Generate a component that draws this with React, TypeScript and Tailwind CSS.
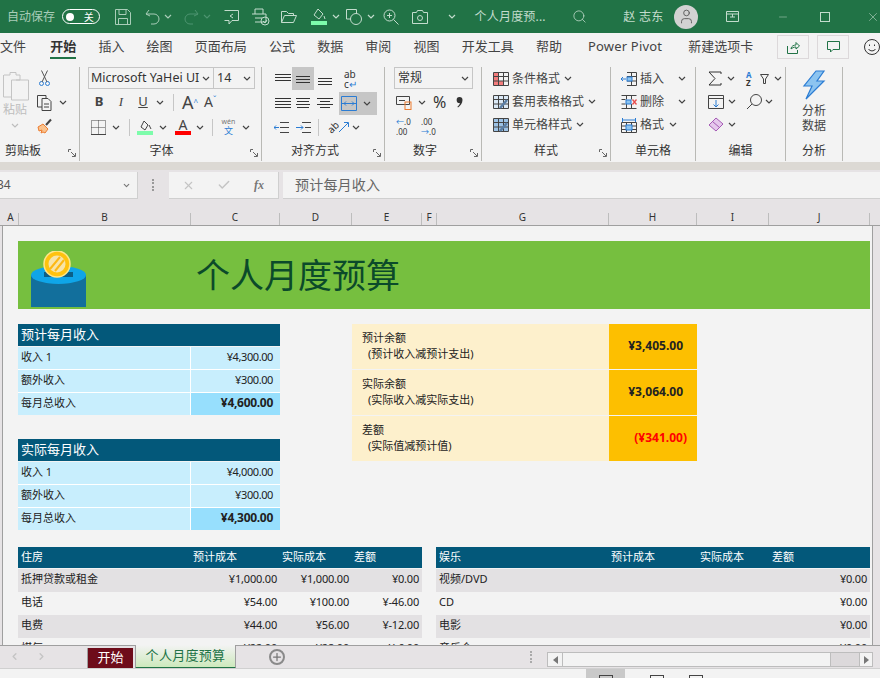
import React from 'react';
import { ChevronDown, Search, User, X, Check, Plus, Minus, ChevronLeft, ChevronRight } from 'lucide-react';

const Chev = ({ className = 'text-[#444]' }: { className?: string }) => (
  <svg width="8" height="5" viewBox="0 0 8 5" className={className} fill="none" stroke="currentColor" strokeWidth="1.2">
    <path d="M1 1l3 3 3-3" />
  </svg>
);

const Ico = ({ w = 16, h = 16, children, className = 'text-[#444]' }: { w?: number; h?: number; children: React.ReactNode; className?: string }) => (
  <svg width={w} height={h} viewBox={`0 0 ${w} ${h}`} fill="none" stroke="currentColor" strokeWidth="1" className={`shrink-0 ${className}`}>
    {children}
  </svg>
);

// dialog launcher in the ribbon group corner
const Launcher = () => (
  <div className="absolute right-[3px] bottom-[4px]">
    <Ico w={8} h={8} className="text-[#666]">
      <path d="M.5 3V.5H3M3 3l4 4M7.5 4v3.5H4" />
    </Ico>
  </div>
);

const Lines = ({ rows }: { rows: [number, number][] }) => (
  <Ico w={16} h={14} className="text-[#333]">
    {rows.map(([x, y], i) => (
      <path key={i} d={`M${x} ${y}.5H${16 - (x === 0 && i % 2 ? 0 : x)}`} />
    ))}
  </Ico>
);

const Group = ({ w, label, labelClass = 'text-center', launcher, children }: { w: string; label: string; labelClass?: string; launcher?: boolean; children: React.ReactNode }) => (
  <div className={`relative h-[94px] shrink-0 border-r border-[#b9b9b5] flex flex-col ${w}`}>
    <div className="flex-1">{children}</div>
    <div className={`h-[20px] text-[12px] leading-[20px] text-[#333] ${labelClass}`}>{label}</div>
    {launcher && <Launcher />}
  </div>
);

const tabs = [
  ['文件', 'w-[24px] mr-[4px]'],
  ['开始', 'w-[26px]'],
  ['插入', 'w-[26px]'],
  ['绘图', 'w-[26px]'],
  ['页面布局', 'w-[52px]'],
  ['公式', 'w-[26px]'],
  ['数据', 'w-[26px]'],
  ['审阅', 'w-[26px]'],
  ['视图', 'w-[26px]'],
  ['开发工具', 'w-[52px]'],
  ['帮助', 'w-[26px]'],
];

const TopBar = () => (
  <div className="h-[33px] bg-[#217346] flex items-center text-[#c3dccd] shrink-0 pl-[7px]">
    <span className="text-[12px] w-[55px] text-[#a9cdb8]">自动保存</span>
    <div className="w-[38px] h-[15px] rounded-full border border-white flex items-center justify-between px-[3px] text-[10px] text-white">
      <span className="w-[8px] h-[8px] rounded-full bg-white" />
      <span className="pr-[2px] leading-none">关</span>
    </div>
    <div className="ml-[15px] w-[30px]">
      <Ico w={16} h={16} className="text-[#a9cdb8]">
        <path d="M.5.500h12l3 3v12H.5zM4 .5v5h7v-5M3.500 15.500v-6h9v6" />
      </Ico>
    </div>
    <Ico w={15} h={16} className="text-[#a9cdb8]">
      <path d="M4 1L1 5l4 2M1 5h8a5 5 0 0 1 0 10H6" />
    </Ico>
    <div className="ml-[4px] w-[20px]"><Chev className="text-[#a9cdb8]" /></div>
    <Ico w={15} h={16} className="text-[#4d9470]">
      <path d="M11 1l3 4-4 2M14 5H6a5 5 0 0 0 0 10h3" />
    </Ico>
    <div className="ml-[4px] w-[21px]"><Chev className="text-[#4d9470]" /></div>
    <Ico w={15} h={16} className="text-[#c3dccd]">
      <path d="M.5 1.500h14v10H8L5 15v-3.500H.5M9 9L6 7l3-2" />
    </Ico>
    <div className="ml-[12px]">
      <Ico w={20} h={18} className="text-[#c3dccd]">
        <path d="M4 6V1h8v5M1 6h14v8H4M4 10h7" />
        <circle cx="14" cy="13" r="4" />
        <path d="M12 13l2 2 2-3" />
      </Ico>
    </div>
    <div className="ml-[10px]">
      <Ico w={16} h={14} className="text-[#c3dccd]">
        <path d="M.5 12.500v-11h5l2 2h5v2M.5 12.500l3-7h12l-3 7z" />
      </Ico>
    </div>
    <div className="ml-[14px] flex flex-col items-center w-[16px]">
      <Ico w={14} h={13} className="text-[#c3dccd]">
        <path d="M6 1l5 5-4 5-5-4zM12 8l1 3" />
      </Ico>
      <div className="w-[16px] h-[4px] bg-[#7dfcab]" />
    </div>
    <div className="ml-[5px] w-[14px]"><Chev className="text-[#c3dccd]" /></div>
    <Ico w={16} h={16} className="text-[#c3dccd]">
      <path d="M5 10H.5V.5h10V5" />
      <circle cx="10" cy="10" r="5.500" />
    </Ico>
    <div className="ml-[5px] w-[16px]"><Chev className="text-[#c3dccd]" /></div>
    <Ico w={16} h={16} className="text-[#c3dccd]">
      <circle cx="6.500" cy="6.500" r="5.500" />
      <path d="M10.500 10.500l5 5M4 6.500h5M6.500 4v5" />
    </Ico>
    <div className="ml-[13px]">
      <Ico w={16} h={14} className="text-[#c3dccd]">
        <path d="M.5 2.500h4l1-2h5l1 2h4v11H.5z" />
        <circle cx="8" cy="8" r="2.500" />
      </Ico>
    </div>
    <div className="ml-[20px] w-[27px]"><Chev className="text-[#c3dccd]" /></div>
    <span className="text-[12px] w-[98px] tracking-[0.2px] whitespace-nowrap">个人月度预...</span>
    <Search size={15} strokeWidth={1.25} className="text-[#c3dccd]" />
    <span className="ml-[36px] text-[12px] w-[51px] tracking-[0.3px] whitespace-nowrap">赵 志东</span>
    <div className="w-[24px] h-[24px] rounded-full bg-[#d2d2d2] flex items-center justify-center">
      <User size={17} strokeWidth={1.25} className="text-[#555]" />
    </div>
    <div className="ml-[28px]">
      <Ico w={13} h={11} className="text-[#c3dccd]">
        <path d="M.5.500h12v10H.5zM.5 3h12M6.500 3v3M4 6h5" />
      </Ico>
    </div>
    <Minus size={12} strokeWidth={1} className="ml-[38px] text-[#c3dccd]" />
    <div className="ml-[31px] w-[10px] h-[10px] border border-[#c3dccd]" />
    <X size={14} strokeWidth={1} className="ml-[36px] text-[#c3dccd]" />
  </div>
);

const TabRow = () => (
  <div className="h-[28px] bg-[#f3f3f3] flex items-center shrink-0 text-[13px] text-[#444] relative">
    <div className="flex gap-[22.2px] items-center">
      {tabs.map(([t, w]) => (
        <div key={t} className={`relative whitespace-nowrap text-center ${w} ${t === '开始' ? 'font-bold text-[#333]' : ''}`}>
          {t}
          {t === '开始' && <div className="absolute left-0 right-0 top-[20px] h-[2px] bg-[#217346]" />}
        </div>
      ))}
    </div>
    <span className="ml-[26px] whitespace-nowrap tracking-[0.2px]">Power Pivot</span>
    <span className="ml-[26px] whitespace-nowrap">新建选项卡</span>
    <div className="ml-[24px] w-[32px] h-[24px] border border-[#dcd8da] flex items-center justify-center">
      <Ico w={13} h={13} className="text-[#217346]">
        <path d="M.5 5v7.500h10V9M4 8c0-3 3-4 5-4V1.500L12.500 5 9 8V6C7 6 5 7 4 8z" />
      </Ico>
    </div>
    <div className="ml-[8px] w-[32px] h-[24px] border border-[#dcd8da] flex items-center justify-center">
      <Ico w={13} h={12} className="text-[#217346]">
        <path d="M.5.500h12v8H6L3.500 11V8.500h-3z" />
      </Ico>
    </div>
    <div className="ml-[15px] shrink-0">
      <Ico w={16} h={16} className="text-[#333]">
        <circle cx="8" cy="8" r="7.500" />
        <path d="M4.500 10c1.500 2.500 5.500 2.500 7 0M5.500 5.500v1.500M10.500 5.500v1.500" />
      </Ico>
    </div>
  </div>
);

const ClipboardGroup = () => (
  <Group w="w-[80px]" label="剪贴板" labelClass="pl-[5px]" launcher>
    <div className="flex h-full">
      <div className="ml-[2px] w-[26px] mt-[4px] flex flex-col items-center text-[#bdbdbd]">
        <Ico w={27} h={30} className="text-[#c4c4c4]">
          <path d="M2 4h6V1.500h6V4h4v5h-4" />
          <path d="M1.500 4v22h8V9h17v20h-17v-3" />
        </Ico>
        <span className="text-[12px] leading-[16px] mt-[1px] whitespace-nowrap">粘贴</span>
        <Chev className="text-[#bdbdbd] mt-[5px]" />
      </div>
      <div className="ml-[9px] pt-[3px] flex flex-col gap-[7px]">
        <div className="pl-[2px] h-[17px]">
          <Ico w={11} h={16} className="text-[#2b7cd3]">
            <circle cx="2.500" cy="13.500" r="2" />
            <circle cx="8.500" cy="13.500" r="2" />
            <path d="M3 12L8.500.5M8 12L2.500.5" stroke="#555" />
          </Ico>
        </div>
        <div className="flex items-center h-[17px] gap-[6px]">
          <Ico w={16} h={16}>
            <path d="M9 3V.5H.5V12H5M5 3.500h6l3 3v9H5zM7 9h5M7 12h5" />
          </Ico>
          <Chev />
        </div>
        <div className="h-[17px]">
          <Ico w={16} h={16} className="text-[#ed7d31]">
            <path d="M1 9l5-3 5 5-3 4-2-1-2 1 1-3-3 1z" fill="#f9c38f" />
            <path d="M9 7l5-5.500" stroke="#444" strokeWidth="2" />
          </Ico>
        </div>
      </div>
    </div>
  </Group>
);

const FontGroup = () => (
  <Group w="w-[182px]" label="字体" labelClass="text-center pr-[18px]" launcher>
    <div className="ml-[8px] flex h-[22px] w-[167px] border border-[#c6c6c6] items-center text-[12.5px] text-[#333]">
      <div className="w-[125px] pl-[2px] flex items-center justify-between border-r border-[#c6c6c6] h-full pr-[3px]">
        <span className="whitespace-nowrap overflow-hidden w-[109px]">Microsoft YaHei UI</span>
        <Chev />
      </div>
      <div className="flex-1 px-[3px] flex items-center justify-between">
        <span>14</span>
        <Chev />
      </div>
    </div>
    <div className="mt-[1px] flex h-[24px] items-center text-[#444]">
      <span className="ml-[8px] w-[22px] text-center font-bold text-[13px]">B</span>
      <span className="w-[22px] text-center italic text-[13px] font-['Liberation_Serif',serif]">I</span>
      <span className="w-[22px] text-center underline text-[13px]">U</span>
      <Chev className="ml-[2px] text-[#444]" />
      <div className="ml-[9px] w-px h-[17px] bg-[#c6c6c6]" />
      <span className="ml-[8px] w-[22px] text-[18px] leading-none whitespace-nowrap">A<sup className="text-[#2b7cd3] text-[8px]">^</sup></span>
      <span className="text-[14px] leading-none whitespace-nowrap">A<sup className="text-[#2b7cd3] text-[8px]">ˇ</sup></span>
    </div>
    <div className="mt-[1px] flex h-[24px] items-center">
      <div className="ml-[11px]">
        <Ico w={15} h={15}>
          <path d="M.5.500h14v14H.5zM7.500.500v14M.5 7.500h14" strokeDasharray="1 1" />
          <path d="M0 14.500h15" />
        </Ico>
      </div>
      <Chev className="ml-[6px] text-[#444]" />
      <div className="ml-[9px] w-px h-[17px] bg-[#c6c6c6]" />
      <div className="ml-[7px] w-[16px] flex flex-col items-center">
        <Ico w={13} h={11}>
          <path d="M5 1l4 4-3 5-4-3zM10 5l2 4" />
        </Ico>
        <div className="w-[16px] h-[4px] bg-[#7dfcab]" />
      </div>
      <Chev className="ml-[6px] text-[#444]" />
      <div className="ml-[8px] w-[16px] flex flex-col items-center text-[14px] leading-[12px] text-[#444]">
        A
        <div className="w-[16px] h-[4px] bg-[#ff0000]" />
      </div>
      <Chev className="ml-[5px] text-[#444]" />
      <div className="ml-[8px] w-px h-[17px] bg-[#c6c6c6]" />
      <div className="ml-[8px] w-[15px] text-center text-[7px] leading-[8px] text-[#777] whitespace-nowrap">
        wén
        <div className="text-[#2b7cd3] text-[9px] leading-[10px]">文</div>
      </div>
      <Chev className="ml-[6px] text-[#444]" />
    </div>
  </Group>
);

const AlignGroup = () => (
  <Group w="w-[123px]" label="对齐方式" labelClass="text-center pr-[16px]" launcher>
    <div className="pl-[10px]">
      <div className="flex h-[23px] items-center">
        <div className="w-[20px] flex justify-start pl-[3px]"><Lines rows={[[0, 2], [0, 5], [0, 8]]} /></div>
        <div className="w-[22px] h-[23px] bg-[#c6c6c6] flex items-center justify-center"><Lines rows={[[1, 4], [1, 7], [1, 10]]} /></div>
        <div className="w-[22px] pl-[3px]"><Lines rows={[[1, 6], [1, 9], [1, 12]]} /></div>
        <div className="ml-[8px] text-[10px] leading-[10px] text-[#333] w-[18px]">
          ab
          <div className="flex items-center h-[10px]">c<span className="text-[#2b7cd3]">↵</span></div>
        </div>
      </div>
      <div className="flex h-[24px] items-center mt-[1px]">
        <div className="w-[20px] pl-[3px]"><Lines rows={[[0, 2], [0, 5], [0, 8], [0, 11]]} /></div>
        <div className="w-[22px] pl-[3px]"><Lines rows={[[1, 2], [2, 5], [1, 8], [2, 11]]} /></div>
        <div className="w-[26px] pl-[3px]"><Lines rows={[[0, 2], [3, 5], [0, 8], [3, 11]]} /></div>
        <div className="ml-[-1px] w-[38px] h-[23px] bg-[#c6c6c6] flex items-center gap-[6px] pl-[2px]">
          <Ico w={16} h={15} className="text-[#2b7cd3]">
            <path d="M.5.500h15v14H.5zM.5 7.500h15M3 7.500l2-2M3 7.500l2 2M13 7.500l-2-2M13 7.500l-2 2" />
          </Ico>
          <Chev />
        </div>
      </div>
      <div className="flex h-[24px] items-center">
        <div className="w-[22px] pl-[2px]">
          <Ico w={15} h={13}>
            <path d="M6 1.500h9M6 6.500h9M6 11.500h9" />
            <path d="M5 6.500H0M2 4.500l-2 2 2 2" stroke="#2b7cd3" />
          </Ico>
        </div>
        <div className="w-[22px] pl-[2px]">
          <Ico w={15} h={13}>
            <path d="M6 1.500h9M9 6.500h6M6 11.500h9" />
            <path d="M0 6.500h7M5 4.500l2 2-2 2" stroke="#2b7cd3" />
          </Ico>
        </div>
        <div className="w-px h-[17px] bg-[#c6c6c6] ml-[2px]" />
        <div className="ml-[8px] text-[10px] text-[#333] -rotate-45 leading-none w-[12px]">ab</div>
        <Ico w={10} h={12} className="text-[#2b7cd3]"><path d="M0 11L9 2M5 1.500h4.500V6" /></Ico>
        <Chev className="ml-[3px] text-[#444]" />
      </div>
    </div>
  </Group>
);

const NumberGroup = () => (
  <Group w="w-[97px]" label="数字" labelClass="text-center pr-[16px]" launcher>
    <div className="pl-[9px]">
      <div className="w-[79px] h-[22px] border border-[#c6c6c6] flex items-center justify-between px-[3px] text-[12px] text-[#333]">
        常规
        <Chev />
      </div>
      <div className="h-[24px] flex items-center mt-[1px] pl-[2px]">
        <Ico w={16} h={15}>
          <path d="M.5 1.500h13v8H.5zM3 5.500h6" />
          <rect x="9" y="7" width="6" height="7.500" stroke="#ed7d31" />
        </Ico>
        <Chev className="ml-[6px] text-[#444]" />
        <span className="ml-[7px] text-[16px] text-[#333] leading-none">%</span>
        <div className="ml-[10px]">
          <svg width="7" height="12" viewBox="0 0 7 12" fill="#333">
            <path d="M3.500 1a3 3 0 0 1 3 3c0 3-2 6-4.500 7.500l-.6-.8C3 9.500 3.800 8.200 3.800 7A3 3 0 0 1 3.500 1z" />
          </svg>
        </div>
      </div>
      <div className="h-[24px] flex items-center mt-[1px] pl-[2px] gap-[9px]">
        <div className="w-[16px] text-[8px] leading-[10px] text-[#333] whitespace-nowrap"><span className="text-[#2b7cd3]">←</span>.0<br />.00</div>
        <div className="w-[16px] text-[8px] leading-[10px] text-[#333] whitespace-nowrap">.00<br /><span className="text-[#2b7cd3]">→</span>.0</div>
      </div>
    </div>
  </Group>
);

const StyleRow = ({ icon, text }: { icon: React.ReactNode; text: string }) => (
  <div className="flex h-[23px] items-center text-[12px] text-[#444] whitespace-nowrap">
    {icon}
    <span className="ml-[3px] mr-[4px]">{text}</span>
    <Chev />
  </div>
);

const GridLines = () => <path d="M.5.500h15v13H.5zM5.500.500v13M10.500.500v13M.5 4.500h15M.5 9h15" />;

const CondIco = () => (
  <Ico w={16} h={14}>
    <rect x="1" y="1" width="4" height="12" fill="#f47c7c" stroke="none" />
    <rect x="5" y="9" width="5" height="4" fill="#f47c7c" stroke="none" />
    <GridLines />
  </Ico>
);

const BrushIco = ({ fill }: { fill: string }) => (
  <Ico w={16} h={14}>
    <rect x="1" y="1" width="14" height="12" fill={fill} stroke="none" />
    <GridLines />
    <path d="M7 13l7-8" stroke="#5b7fa6" strokeWidth="2.500" />
  </Ico>
);

const InsertIco = () => (
  <Ico w={16} h={14}>
    <path d="M6 .5h9.500v13H6M6 4.500h9.500M6 9h9.500M10.500.500v13" />
    <rect x="6" y="5" width="5" height="4" fill="#8cc4f0" stroke="#2b7cd3" />
    <path d="M0 7h5M2 5L0 7l2 2" stroke="#2b7cd3" />
  </Ico>
);

const DeleteIco = () => (
  <Ico w={16} h={14}>
    <path d="M.5.500h15M.5 13.500h15M.5 4.500h4M.5 9h4M5.500.500v4M5.500 9v4.500M10.500.500v4M10.500 9v4.500" />
    <rect x="5" y="5" width="5" height="4" fill="#8cc4f0" stroke="#2b7cd3" />
    <path d="M11.500 4.500l4 5M15.500 4.500l-4 5" stroke="#e84c4c" strokeWidth="1.300" />
  </Ico>
);

const FormatIco = () => (
  <Ico w={16} h={16}>
    <path d="M1.500 3h13M1.500 1v4M14.500 1v4" stroke="#2b7cd3" />
    <path d="M.5 5.500h15v10H.5zM5.500 5.500v10M10.500 5.500v10M.5 9h15M.5 12.500h15" />
    <rect x="5" y="8" width="6" height="5" fill="#8cc4f0" stroke="#2b7cd3" />
  </Ico>
);

const StylesGroup = () => (
  <Group w="w-[129px]" label="样式" launcher>
    <div className="pl-[11px]">
      <StyleRow text="条件格式" icon={<CondIco />} />
      <StyleRow text="套用表格格式" icon={<BrushIco fill="#dbe9f6" />} />
      <StyleRow text="单元格样式" icon={<BrushIco fill="#9dc3e6" />} />
    </div>
  </Group>
);

const CellRow = ({ icon, text, gap }: { icon: React.ReactNode; text: string; gap: string }) => (
  <div className="flex h-[23px] items-center text-[12px] text-[#444] whitespace-nowrap">
    {icon}
    <span className={`ml-[3px] ${gap}`}>{text}</span>
    <Chev />
  </div>
);

const CellsGroup = () => (
  <Group w="w-[85px]" label="单元格">
    <div className="pl-[10px]">
      <CellRow text="插入" gap="mr-[14px]" icon={<InsertIco />} />
      <CellRow text="删除" gap="mr-[14px]" icon={<DeleteIco />} />
      <CellRow text="格式" gap="mr-[5px]" icon={<FormatIco />} />
    </div>
  </Group>
);

const EditGroup = () => (
  <Group w="w-[90px]" label="编辑">
    <div className="pl-[12px]">
      <div className="flex h-[23px] items-center gap-[5px]">
        <Ico w={14} h={15} className="text-[#333]">
          <path d="M13 3V1H1l6 6.500L1 14h12v-2" />
        </Ico>
        <Chev />
        <div className="ml-[6px] text-[8px] leading-[8px] font-bold text-[#2b7cd3] w-[9px]">A<div className="text-[#333]">Z</div></div>
        <Ico w={9} h={10}><path d="M.5.500h8L5.500 5v4.500h-2V5z" /></Ico>
        <Chev />
      </div>
      <div className="flex h-[23px] items-center">
        <Ico w={16} h={14}>
          <path d="M.5.500h15v13H.5zM.5 3.500h15" />
          <path d="M8 5v7M5.500 9.500L8 12l2.500-2.500" stroke="#2b7cd3" />
        </Ico>
        <Chev className="ml-[4px] text-[#444]" />
        <div className="ml-[10px]">
          <Ico w={16} h={16}><circle cx="10" cy="6" r="5.500" /><path d="M6 10l-5 5" /></Ico>
        </div>
        <Chev className="ml-[3px] text-[#444]" />
      </div>
      <div className="flex h-[23px] items-center gap-[4px]">
        <Ico w={16} h={15} className="text-[#a55bb5]">
          <path d="M1 8l7-7 7 6-7 7z" fill="#e5c8ec" />
          <path d="M4.500 4.500l7 6" />
        </Ico>
        <Chev />
      </div>
    </div>
  </Group>
);

const AnalysisGroup = () => (
  <Group w="w-[57px]" label="分析">
    <div className="flex flex-col items-center pt-[3px]">
      <svg width="24" height="30" viewBox="0 0 24 30" className="shrink-0">
        <path d="M14 1h8l-7 10h7L4 29l6-13H2z" fill="#8cc4f0" stroke="#2b7cd3" strokeWidth="1.2" />
      </svg>
      <div className="mt-[3px] text-[12px] leading-[15px] text-center text-[#444]">分析<br />数据</div>
    </div>
  </Group>
);

const FormulaBar = () => (
  <div className="h-[40px] bg-[#e6e3e5] shrink-0 pt-[2px] flex">
    <div className="w-[138px] h-[27px] bg-[#f3f3f3] border-b border-r border-[#cfcfcf] flex items-center justify-between text-[12px] text-[#555] pr-[6px]">
      <span className="ml-[-3px]">34</span>
      <ChevronDown size={9} strokeWidth={3} className="text-[#777]" />
    </div>
    <div className="ml-[14px] w-[2px] h-[12px] mt-[7px] border-l-2 border-dotted border-[#999]" />
    <div className="ml-[15px] w-[110px] h-[27px] bg-[#f3f3f3] border-b border-r border-[#cfcfcf] flex items-center text-[#c4c4c4]">
      <X size={13} strokeWidth={2} className="ml-[13px]" />
      <Check size={14} strokeWidth={2.5} className="ml-[22px]" />
      <span className="ml-[23px] text-[12px] italic font-bold text-[#777] font-['Liberation_Serif',serif]">fx</span>
    </div>
    <div className="ml-[4px] flex-1 h-[27px] bg-[#f3f3f3] border-b border-[#cfcfcf] pl-[12px] text-[14px] leading-[26px] text-[#666] tracking-[0.2px]">
      预计每月收入
    </div>
  </div>
);

const cols = [
  ['A', 'w-[16px]'],
  ['B', 'w-[172px]'],
  ['C', 'w-[89px]'],
  ['D', 'w-[72px]'],
  ['E', 'w-[70px]'],
  ['F', 'w-[15px]'],
  ['G', 'w-[172px]'],
  ['H', 'w-[88px]'],
  ['I', 'w-[72px]'],
  ['J', 'w-[101px]'],
];

const ColHeader = () => (
  <div className="h-[16px] bg-[#e6e3e5] border-b border-[#9f9f9f] flex pl-[3px] shrink-0 text-[10px] leading-[15px] text-[#333]">
    {cols.map(([c, w]) => (
      <div key={c} className={`text-center border-r border-[#bdbdbd] h-[12px] mt-[3px] ${w}`}>
        <div className="mt-[-3px]">{c}</div>
      </div>
    ))}
  </div>
);

const IncomeTable = ({ title, rows, total }: { title: string; rows: [string, string][]; total: string }) => (
  <div className="w-[262px] text-[11px] text-[#222]">
    <div className="h-[22px] bg-[#03587a] text-white text-[13px] leading-[20px] pl-[3px] mb-px">{title}</div>
    {rows.map(([a, b]) => (
      <div key={a} className="flex h-[23px] leading-[20px] border-b border-white bg-[#c8eefd]">
        <div className="w-[173px] pl-[3px] border-r border-white">{a}</div>
        <div className="flex-1 text-right pr-[7px] tracking-[-0.4px]">{b}</div>
      </div>
    ))}
    <div className="flex h-[22px] leading-[20px]">
      <div className="w-[173px] pl-[3px] border-r border-white bg-[#c8eefd]">每月总收入</div>
      <div className="flex-1 text-right pr-[7px] bg-[#97dffd] font-bold text-[12px] tracking-[-0.3px]">{total}</div>
    </div>
  </div>
);

const SummaryRow = ({ a, b, v, red }: { a: string; b: string; v: string; red?: boolean }) => (
  <div className="flex h-[46px] border-b border-[#f3f3f3] last:border-b-0 last:h-[45px]">
    <div className="w-[257px] bg-[#fdf0cc] pl-[10px] pt-[6px] text-[11px] leading-[16px] text-[#222]">
      {a}
      <div className="pl-[6px]">{b}</div>
    </div>
    <div className={`w-[88px] bg-[#fdbf00] flex items-center justify-end text-[12px] font-bold pb-[2px] ${red ? 'text-[#ff0000] pr-[10px]' : 'text-[#222] pr-[14px]'}`}>
      {v}
    </div>
  </div>
);

const CostTable = ({ w, title, rows }: { w: string; title: string; rows: string[][] }) => (
  <div className={`${w} text-[11px] text-[#222] shrink-0`}>
    <div className="h-[21px] bg-[#03587a] text-white leading-[19px] flex pl-[3px]">
      <div className="w-[172px]">{title}</div>
      <div className="w-[89px]">预计成本</div>
      <div className="w-[72px]">实际成本</div>
      <div>差额</div>
    </div>
    <div className="h-[1px] bg-[#f3f3f3]" />
    {rows.map((r, i) => (
      <div key={r[0]} className={`h-[23px] leading-[20px] flex tracking-[-0.2px] ${i % 2 === 0 ? 'bg-[#e3e1e3]' : 'bg-[#f3f3f3]'}`}>
        <div className="pl-[3px] w-[172px] tracking-normal">{r[0]}</div>
        <div className="w-[89px] text-right pr-[2px] shrink-0">{r[1]}</div>
        <div className="w-[72px] text-right pr-[2px] shrink-0">{r[2]}</div>
        <div className="flex-1 text-right pr-[3px]">{r[3]}</div>
      </div>
    ))}
  </div>
);

const Sheet = () => (
  <div className="flex-1 min-h-0 flex overflow-hidden">
    <div className="w-[3px] bg-[#e6e3e5] border-r border-[#9f9f9f] shrink-0" />
    <div className="w-[870px] bg-[#f3f3f3] border-r border-[#9f9f9f] shrink-0 pl-[15px] pt-[15px] overflow-hidden">
      <div className="w-[852px] h-[68px] bg-[#76bf3f] relative flex items-center pl-[178px] text-[34px] leading-none text-[#0b4a2a]">
        <svg width="60" height="56" viewBox="0 0 60 56" className="absolute left-[12px] bottom-[2px]">
          <path d="M1 24v32h55V24z" fill="#126f9c" />
          <ellipse cx="28.500" cy="24" rx="27.500" ry="9" fill="#0fa5e8" />
          <rect x="14" y="21" width="29" height="5" fill="#0b5f86" />
          <circle cx="27" cy="13" r="13" fill="#ffc20e" stroke="#fde68a" strokeWidth="1.500" />
          <circle cx="27" cy="13" r="8.500" fill="#f7e4a8" />
          <path d="M20 18l10-12M25 20l9-11" stroke="#fdb813" strokeWidth="2" />
        </svg>
        个人月度预算
      </div>
      <div className="mt-[15px] flex">
        <div className="w-[334px] shrink-0 flex flex-col gap-[24px]">
          <IncomeTable title="预计每月收入" rows={[['收入 1', '¥4,300.00'], ['额外收入', '¥300.00']]} total="¥4,600.00" />
          <IncomeTable title="实际每月收入" rows={[['收入 1', '¥4,000.00'], ['额外收入', '¥300.00']]} total="¥4,300.00" />
        </div>
        <div>
          <SummaryRow a="预计余额" b="(预计收入减预计支出)" v="¥3,405.00" />
          <SummaryRow a="实际余额" b="(实际收入减实际支出)" v="¥3,064.00" />
          <SummaryRow a="差额" b="(实际值减预计值)" v="(¥341.00)" red />
        </div>
      </div>
      <div className="mt-[17px] flex gap-[14px]">
        <CostTable
          w="w-[404px]"
          title="住房"
          rows={[
            ['抵押贷款或租金', '¥1,000.00', '¥1,000.00', '¥0.00'],
            ['电话', '¥54.00', '¥100.00', '¥-46.00'],
            ['电费', '¥44.00', '¥56.00', '¥-12.00'],
            ['煤气', '¥22.00', '¥28.00', '¥-6.00'],
          ]}
        />
        <CostTable
          w="w-[434px]"
          title="娱乐"
          rows={[
            ['视频/DVD', '', '', '¥0.00'],
            ['CD', '', '', '¥0.00'],
            ['电影', '', '', '¥0.00'],
            ['音乐会', '', '', '¥0.00'],
          ]}
        />
      </div>
    </div>
    <div className="flex-1 bg-[#e6e3e5]" />
  </div>
);

const SheetTabs = () => (
  <div className="h-[23px] bg-[#e6e3e5] border-t border-[#9f9f9f] flex shrink-0 text-[#c4c4c4]">
    <ChevronLeft size={11} strokeWidth={3} className="ml-[9px] mt-[5px]" />
    <ChevronRight size={11} strokeWidth={3} className="ml-[16px] mt-[5px]" />
    <div className="ml-[40px] w-px h-[20px] mt-[2px] bg-[#9f9f9f]" />
    <div className="w-[45px] h-[22px] mt-[2px] bg-[#6e0c1a] text-white text-[13px] leading-[19px] text-center">开始</div>
    <div className="ml-[2px] w-[101px] h-[24px] bg-gradient-to-b from-[#f3f3f3] to-[#cde9bc] border-x border-[#9f9f9f] border-b-2 border-b-[#217346] text-[#217346] text-[13px] leading-[20px] text-center tracking-[0.3px] -mt-px">
      个人月度预算
    </div>
    <div className="ml-[33px] mt-[3px] w-[16px] h-[16px] rounded-full border-2 border-[#8a8a8a] flex items-center justify-center">
      <Plus size={12} strokeWidth={2.5} className="text-[#777]" />
    </div>
    <div className="ml-[245px] mt-[5px] h-[12px] border-l-2 border-dotted border-[#aaa]" />
    <div className="ml-[15px] mt-[6px] w-[326px] h-[15px] border border-[#bdbdbd] flex">
      <div className="w-[15px] flex items-center justify-center bg-[#f3f3f3] border-r border-[#bdbdbd] text-[#777]">
        <svg width="5" height="8" viewBox="0 0 5 8" fill="currentColor"><path d="M5 0v8L0 4z" /></svg>
      </div>
      <div className="w-[268px] bg-[#f3f3f3] border-r border-[#bdbdbd]" />
      <div className="flex-1 bg-[#dcd9db]" />
      <div className="w-[13px] flex items-center justify-center bg-[#f3f3f3] border-l border-[#bdbdbd] text-[#777]">
        <svg width="5" height="8" viewBox="0 0 5 8" fill="currentColor"><path d="M0 0v8l5-4z" /></svg>
      </div>
    </div>
  </div>
);

const StatusBar = () => (
  <div className="h-[10px] shrink-0 bg-[#f3f3f3] border-t border-[#d0d0d0] flex pl-[586px] gap-[25px] overflow-hidden">
    <div className="w-[39px] h-[10px] bg-[#c9c9c9] flex justify-center pt-[6px]">
      <div className="w-[14px] h-[8px] border border-[#444]" />
    </div>
    <div className="w-[14px] h-[8px] mt-[6px] border border-[#444]" />
    <div className="w-[14px] h-[8px] mt-[6px] border border-[#444]" />
  </div>
);

export default function App() {
  return (
    <div className="w-[880px] h-[678px] overflow-hidden flex flex-col bg-[#f3f3f3] font-['Noto_Sans','Noto_Sans_CJK_SC',sans-serif]">
      <TopBar />
      <TabRow />
      <div className="h-[101px] shrink-0 bg-[#f3f3f3] flex pt-[6px]">
        <ClipboardGroup />
        <FontGroup />
        <AlignGroup />
        <NumberGroup />
        <StylesGroup />
        <CellsGroup />
        <EditGroup />
        <AnalysisGroup />
      </div>
      <div className="h-[8px] shrink-0 bg-[#dcd9d4]" />
      <FormulaBar />
      <ColHeader />
      <Sheet />
      <SheetTabs />
      <StatusBar />
    </div>
  );
}
